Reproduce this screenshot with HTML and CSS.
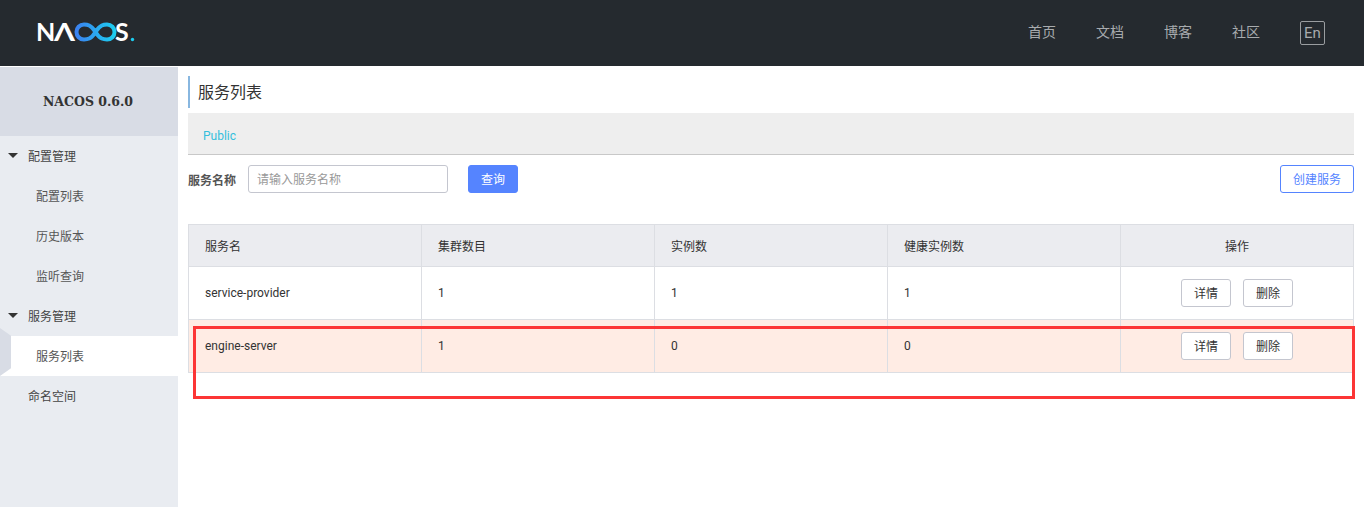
FILE: index.html
```html
<!DOCTYPE html>
<html lang="zh-CN">
<head>
  <meta charset="UTF-8">
  <title>Nacos</title>
  <link rel="stylesheet" href="styles.css">
</head>
<body>
  <header class="header">
    <svg class="logo" width="100" height="40" viewBox="0 0 100 40">
      <defs>
        <linearGradient id="loop" x1="0" x2="1" y1="0" y2="0">
          <stop offset="0" stop-color="#3b82f0"/>
          <stop offset="1" stop-color="#1ccdf0"/>
        </linearGradient>
      </defs>
      <text class="logo-text" x="-2" y="28">N</text>
      <text class="logo-text" x="16" y="28" textLength="21" lengthAdjust="spacingAndGlyphs">Λ</text>
      <path d="M57.5 19 C53 11.5 49 11.5 46 11.5 C41.5 11.5 38.5 15 38.5 19 C38.5 23 41.5 26.500 46 26.500 C49 26.500 53 26.500 57.500 19 C62 11.5 66 11.5 69 11.5 C73.500 11.5 76.500 15 76.500 19 C76.500 23 73.500 26.500 69 26.500 C66 26.500 62 26.500 57.500 19 Z" fill="none" stroke="url(#loop)" stroke-width="4"/>
      <text class="logo-text" x="77" y="28">S</text>
      <circle cx="94.5" cy="26.5" r="1.7" fill="#1ccdf0"/>
    </svg>
    <nav class="top-nav">
      <a>首页</a>
      <a>文档</a>
      <a>博客</a>
      <a>社区</a>
      <span class="lang">En</span>
    </nav>
  </header>

  <div class="layout">
    <aside class="sidebar">
      <div class="version">NACOS 0.6.0</div>
      <div class="menu-group"><i class="caret"></i>配置管理</div>
      <div class="menu-item">配置列表</div>
      <div class="menu-item">历史版本</div>
      <div class="menu-item">监听查询</div>
      <div class="menu-group"><i class="caret"></i>服务管理</div>
      <div class="menu-item active">服务列表</div>
      <div class="menu-group">命名空间</div>
      <div class="collapse-tab"></div>
    </aside>

    <main class="content">
      <h1 class="page-title">服务列表</h1>
      <div class="namespace"><a>Public</a></div>

      <div class="search-row">
        <label class="search-label">服务名称</label>
        <input class="search-input" type="text" placeholder="请输入服务名称">
        <button class="btn btn-primary">查询</button>
        <button class="btn btn-outline">创建服务</button>
      </div>

      <div class="table-wrap">
        <table class="service-table">
          <thead>
            <tr>
              <th>服务名</th>
              <th>集群数目</th>
              <th>实例数</th>
              <th>健康实例数</th>
              <th class="center">操作</th>
            </tr>
          </thead>
          <tbody>
            <tr>
              <td>service-provider</td>
              <td>1</td>
              <td>1</td>
              <td>1</td>
              <td class="center"><button class="btn">详情</button><button class="btn">删除</button></td>
            </tr>
            <tr class="warn">
              <td>engine-server</td>
              <td>1</td>
              <td>0</td>
              <td>0</td>
              <td class="center"><button class="btn">详情</button><button class="btn">删除</button></td>
            </tr>
          </tbody>
        </table>
        <div class="red-box"></div>
      </div>
    </main>
  </div>
</body>
</html>
```

FILE: styles.css
```css
:root {
  --cjk: "Roboto", "Noto Sans CJK SC", sans-serif;
  --border: #dcdee3;
  --text: #333;
}

* {
  box-sizing: border-box;
}

html, body {
  height: 100%;
}

body {
  margin: 0;
  font-family: var(--cjk);
  font-size: 12px;
  color: var(--text);
  background: #fff;
  overflow: hidden;
}

.header {
  height: 66px;
  background: #252a2f;
  display: flex;
  align-items: center;
  justify-content: space-between;
  padding: 0 39px 0 38px;
}

.logo {
  display: block;
  overflow: visible;
}

.logo-text {
  font-family: "Lato", sans-serif;
  font-size: 25px;
  font-weight: 700;
  fill: #fff;
}

.top-nav {
  display: flex;
  align-items: center;
  gap: 40px;
  font-size: 14px;
  line-height: 24px;
  color: #a8abae;
}

.top-nav a {
  position: relative;
  top: -1px;
}

.lang {
  width: 25px;
  height: 24px;
  border: 1px solid #9a9da0;
  border-radius: 2px;
  display: flex;
  align-items: center;
  justify-content: center;
  font-size: 15px;
}

.layout {
  display: flex;
  height: calc(100% - 66px);
  margin-top: 1px;
}

.sidebar {
  width: 178px;
  flex: none;
  background: #e9ecf1;
  position: relative;
}

.version {
  height: 69px;
  padding-right: 2px;
  background: #d8dce5;
  display: flex;
  align-items: center;
  justify-content: center;
  font-family: "DejaVu Serif", serif;
  font-size: 12.5px;
  font-weight: 700;
  color: #333;
}

.menu-group,
.menu-item {
  height: 40px;
  line-height: 42px;
  position: relative;
  color: #444;
}

.menu-group {
  padding-left: 28px;
}

.menu-item {
  padding-left: 36px;
  color: #555;
}

.menu-item.active {
  background: #fff;
}

.caret {
  position: absolute;
  left: 8px;
  top: 17px;
  border-left: 5px solid transparent;
  border-right: 5px solid transparent;
  border-top: 5px solid #333;
}

.collapse-tab {
  position: absolute;
  left: 0;
  top: 261px;
  width: 11px;
  height: 48px;
  background: #d8dce5;
  clip-path: polygon(0 0, 100% 16%, 100% 84%, 0 100%);
}

.content {
  flex: 1;
  min-width: 0;
  padding: 9px 10px 0;
}

.page-title {
  margin: 0;
  height: 32px;
  line-height: 34px;
  padding-left: 8px;
  border-left: 2px solid #88b7e0;
  font-size: 16px;
  font-weight: 400;
  color: #333;
}

.namespace {
  margin-top: 5px;
  height: 42px;
  line-height: 46px;
  padding-left: 15px;
  background: #eee;
  border-bottom: 1px solid #c8c8c8;
  color: #33bfdc;
}

.search-row {
  display: flex;
  align-items: center;
  margin-top: 10px;
  height: 28px;
}

.search-label {
  width: 60px;
  font-weight: 700;
  color: #555;
}

.search-input {
  width: 200px;
  height: 28px;
  padding: 2px 8px 0;
  border: 1px solid #c4c6cf;
  border-radius: 3px;
  font-family: inherit;
  font-size: 12px;
  outline: none;
}

.search-input::placeholder {
  color: #999;
}

.btn {
  width: 50px;
  height: 28px;
  padding: 0 0 2px;
  border: 1px solid #c4c6cf;
  border-radius: 3px;
  background: #fff;
  font-family: inherit;
  font-size: 12px;
  color: #333;
}

.btn-primary {
  margin-left: 20px;
  border-color: #5584ff;
  background: #5584ff;
  color: #fff;
}

.btn-outline {
  width: 74px;
  margin-left: auto;
  border-color: #5584ff;
  color: #5584ff;
}

.table-wrap {
  position: relative;
  margin-top: 31px;
}

.service-table {
  width: 1166px;
  table-layout: fixed;
  border-collapse: collapse;
  border: 1px solid var(--border);
}

.service-table th,
.service-table td {
  border: 1px solid var(--border);
  padding: 0 16px;
  text-align: left;
  font-weight: 400;
  color: #333;
}

.service-table th {
  height: 42px;
  background: #ebecf0;
}

.service-table td {
  height: 53px;
}

.service-table .center {
  text-align: center;
}

.service-table .btn + .btn {
  margin-left: 12px;
}

.warn td {
  background: #ffece4;
}

.red-box {
  position: absolute;
  left: 5px;
  top: 102px;
  width: 1162px;
  height: 73px;
  border: 3px solid #fc3535;
}
```
